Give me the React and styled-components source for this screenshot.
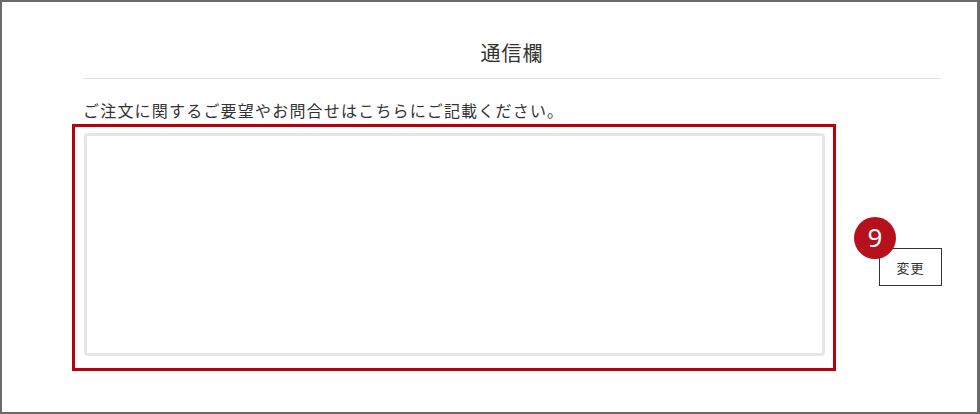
import React from "react";
import styled, { createGlobalStyle } from "styled-components";

const Global = createGlobalStyle`
  html, body { margin: 0; padding: 0; background: #fff; }
  body { font-family: "Noto Sans CJK JP", "Noto Sans", sans-serif; color: #333; }
  * { box-sizing: border-box; }
`;

const Frame = styled.div`
  width: 980px;
  height: 414px;
  border: 2px solid #6a6a6a;
  border-right-width: 3px;
  background: #fff;
  overflow: hidden;
`;

const Column = styled.section`
  width: 859px;
  margin-left: 81px;
`;

const Heading = styled.h2`
  margin: 37px 0 0;
  padding-bottom: 11px;
  border-bottom: 1px solid #e2e2e2;
  width: 858px;
  font-size: 20px;
  line-height: 28px;
  font-weight: 400;
  letter-spacing: 1px;
  text-align: center;
  color: #333;
`;

const Note = styled.p`
  margin: 20px 0 3px;
  font-size: 16px;
  line-height: 22px;
  letter-spacing: 1.2px;
  color: #333;
`;

const Row = styled.div`
  display: flex;
  align-items: flex-start;
`;

const Highlight = styled.div`
  margin-left: -11px;
  width: 764px;
  height: 247px;
  border: 3px solid #b8000f;
  padding: 6px 8px 0 9px;
`;

const TextArea = styled.textarea`
  display: block;
  width: 741px;
  height: 223px;
  border: 3px solid #e6e6e6;
  border-radius: 4px;
  background: #fff;
  resize: none;
  outline: none;
  font-family: inherit;
`;

const ButtonWrap = styled.div`
  position: relative;
  margin-left: auto;
  margin-top: 124px;
`;

const Button = styled.button`
  display: block;
  width: 63px;
  height: 38px;
  border: 1px solid #333;
  background: #fff;
  color: #333;
  font-family: "Noto Sans CJK JP", sans-serif;
  font-size: 13px;
  letter-spacing: 1px;
  padding: 0;
  cursor: pointer;
`;

const Badge = styled.span`
  position: absolute;
  left: -25px;
  top: -31px;
  width: 42px;
  height: 42px;
  border-radius: 50%;
  background: #b5101b;
  color: #fff;
  font-family: "Noto Sans", sans-serif;
  font-weight: 400;
  font-size: 26px;
  line-height: 41px;
  text-align: center;
`;

export default function App() {
  return (
    <>
      <Global />
      <Frame>
        <Column>
          <Heading>通信欄</Heading>
          <Note>ご注文に関するご要望やお問合せはこちらにご記載ください。</Note>
          <Row>
            <Highlight>
              <TextArea />
            </Highlight>
            <ButtonWrap>
              <Button>変更</Button>
              <Badge>9</Badge>
            </ButtonWrap>
          </Row>
        </Column>
      </Frame>
    </>
  );
}
